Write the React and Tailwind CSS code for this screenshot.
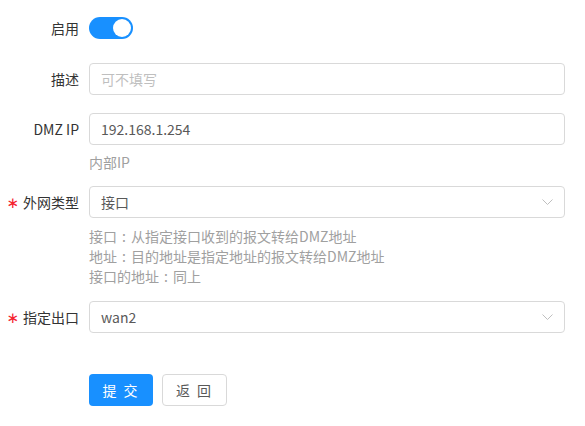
import { useState } from "react";

const FONT = "font-['Noto_Sans_CJK_SC','Noto_Sans',sans-serif]";

const Label = ({ children, required }) => (
  <div className="w-[89px] shrink-0 pr-[10px] flex items-center justify-end text-[14px] text-[#333]">
    {required && (
      <span className="text-[#f5222d] mr-[4px] text-[15px] leading-none translate-y-[1px] font-['DejaVu_Sans',sans-serif]">
        ∗
      </span>
    )}
    {children}
  </div>
);

// full-width colon, centred in its cell
const Colon = () => <span className="inline-block w-[14px] text-center">:</span>;

const Help = ({ lines }) => (
  <div className="pl-[89px] text-[14px] leading-[20px] text-[#a0a0a0]">
    {lines.map(([a, b]) => (
      <div key={a + (b || "")}>
        {a}
        {b !== undefined && (
          <>
            <Colon />
            {b}
          </>
        )}
      </div>
    ))}
  </div>
);

const Chevron = () => (
  <svg width="11" height="6" viewBox="0 0 11 6" fill="none">
    <path d="M0.5 0.5 L5.5 5.5 L10.5 0.5" stroke="#bfbfbf" strokeWidth="1" />
  </svg>
);

const Select = ({ value }) => (
  <div className="w-[476px] h-[32px] border border-[#d9d9d9] rounded-[4px] flex items-center justify-between pl-[11px] pr-[11px] text-[14px] text-[#595959]">
    <span>{value}</span>
    <Chevron />
  </div>
);

export default function App() {
  const [enabled, setEnabled] = useState(true);
  const [desc, setDesc] = useState("");
  const [ip, setIp] = useState("192.168.1.254");

  return (
    <div className={`${FONT} w-[585px] h-[426px] bg-white overflow-hidden`}>
      <div className="flex items-center mt-[17px] h-[22px]">
        <Label>启用</Label>
        <button
          onClick={() => setEnabled((v) => !v)}
          className={`w-[44px] h-[22px] rounded-full relative ${enabled ? "bg-[#1890ff]" : "bg-[#bfbfbf]"}`}
        >
          <span
            className={`absolute top-[2px] w-[18px] h-[18px] rounded-full bg-white ${enabled ? "right-[2px]" : "left-[2px]"}`}
          />
        </button>
      </div>

      <div className="flex mt-[24px] h-[32px]">
        <Label>描述</Label>
        <input
          className="w-[476px] h-[32px] border border-[#d9d9d9] rounded-[4px] px-[11px] text-[14px] text-[#595959] placeholder:text-[#bfbfbf] outline-none"
          placeholder="可不填写"
          value={desc}
          onChange={(e) => setDesc(e.target.value)}
        />
      </div>

      <div className="flex mt-[18px] h-[32px]">
        <Label>DMZ IP</Label>
        <input
          className="w-[476px] h-[32px] border border-[#d9d9d9] rounded-[4px] px-[11px] text-[14px] text-[#595959] outline-none"
          value={ip}
          onChange={(e) => setIp(e.target.value)}
        />
      </div>
      <div className="mt-[7px]">
        <Help lines={[["内部IP"]]} />
      </div>

      <div className="flex mt-[14px] h-[32px]">
        <Label required>外网类型</Label>
        <Select value="接口" />
      </div>
      <div className="mt-[8px]">
        <Help
          lines={[
            ["接口", "从指定接口收到的报文转给DMZ地址"],
            ["地址", "目的地址是指定地址的报文转给DMZ地址"],
            ["接口的地址", "同上"],
          ]}
        />
      </div>

      <div className="flex mt-[15px] h-[32px]">
        <Label required>指定出口</Label>
        <Select value="wan2" />
      </div>

      <div className="flex gap-[9px] mt-[41px] pl-[89px]">
        <button className="w-[64px] h-[32px] rounded-[4px] bg-[#1890ff] text-white text-[14px] tracking-[2px]">
          提 交
        </button>
        <button className="w-[65px] h-[32px] rounded-[4px] border border-[#d9d9d9] bg-white text-[#595959] text-[14px] tracking-[2px]">
          返 回
        </button>
      </div>
    </div>
  );
}
